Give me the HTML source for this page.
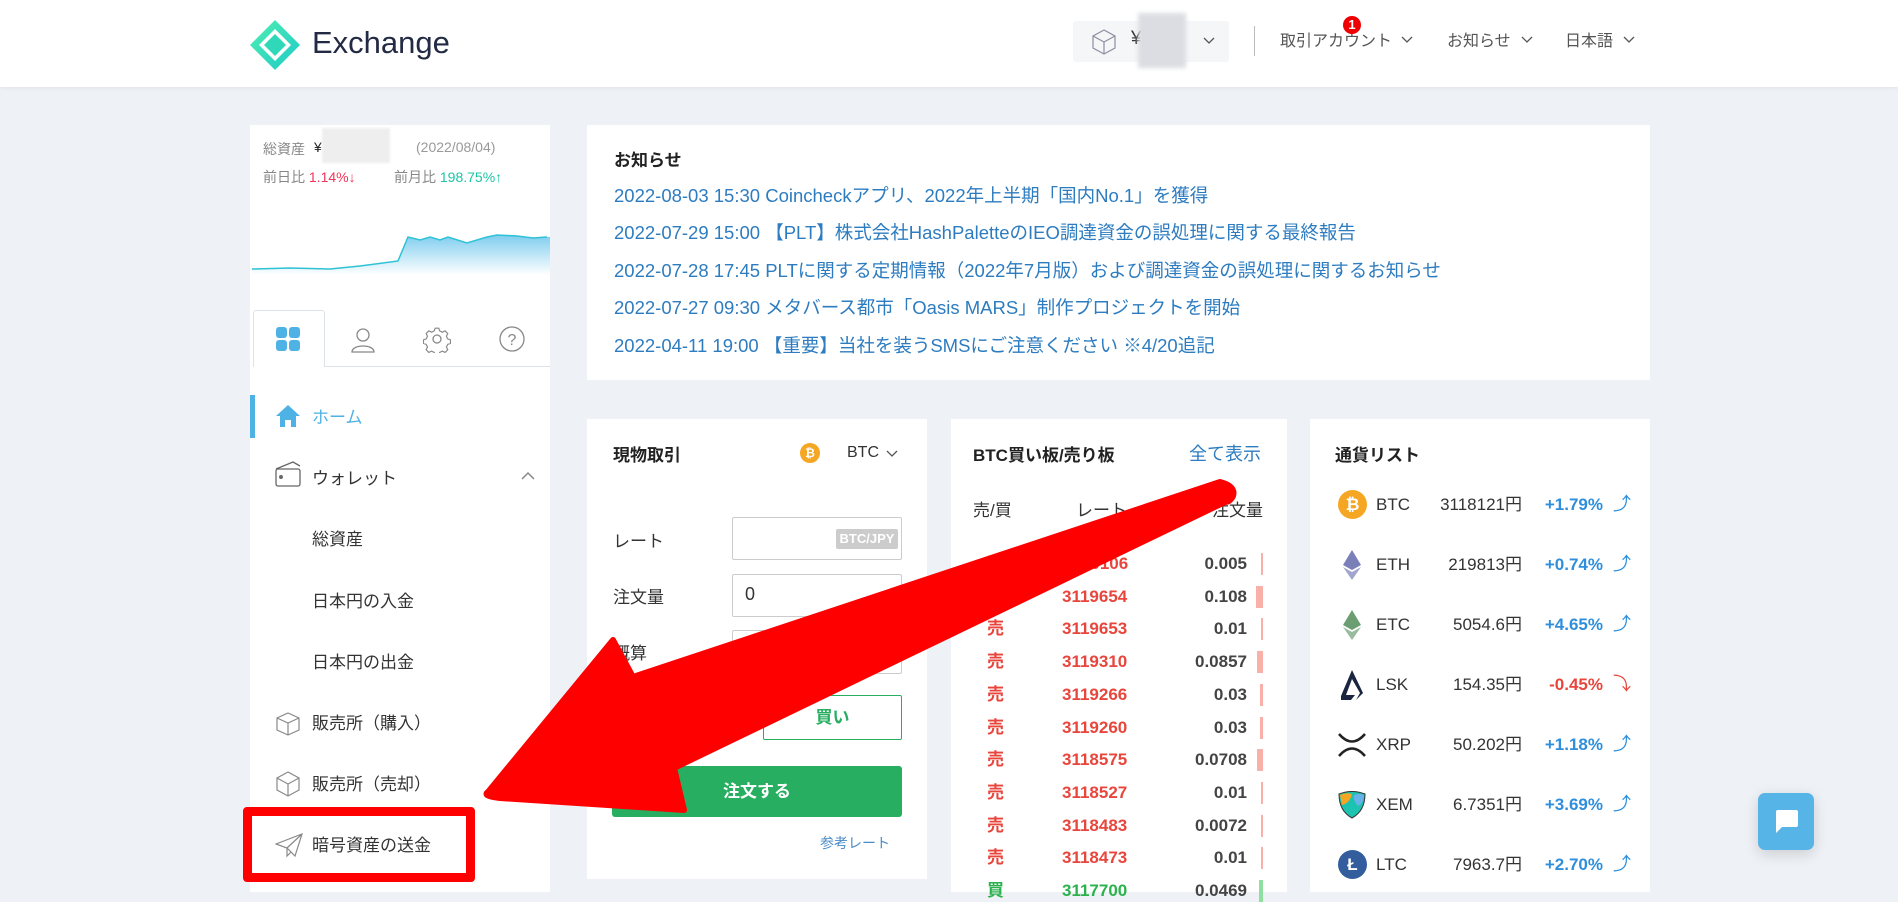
<!DOCTYPE html>
<html><head><meta charset="utf-8">
<style>
*{margin:0;padding:0;box-sizing:border-box}
body{width:1898px;height:892px;overflow:hidden;background:#eef1f6;font-family:"Liberation Sans","Noto Sans CJK JP",sans-serif;color:#333;position:relative}
.a{position:absolute;white-space:nowrap}
.hdr{position:absolute;left:0;top:0;width:1898px;height:87px;background:#fff;box-shadow:0 1px 4px rgba(0,0,0,.06)}
.panel{position:absolute;background:#fff}
.nav{font-size:17px;color:#333}
.news{font-size:18.5px;color:#2d7cc0;left:27px}
.ob{font-size:17px;font-weight:bold}
.cur{font-size:17px;line-height:22px}
</style></head><body>
<div class="hdr">
 <svg class="a" style="left:250px;top:20px" width="50" height="50" viewBox="0 0 50 50">
  <defs><linearGradient id="g" x1="0" y1="0" x2="1" y2="1"><stop offset="0" stop-color="#4ff0b0"/><stop offset="1" stop-color="#1ec9c9"/></linearGradient></defs>
  <polygon points="25,0 50,25 25,50 0,25" fill="url(#g)"/>
  <polygon points="25,9 41,25 25,41 9,25" fill="#fff"/>
  <polygon points="25,14 36,25 25,36 14,25" fill="#2fd8b8"/>
 </svg>
 <div class="a" style="left:312px;top:25px;font-size:31px;color:#232a44">Exchange</div>
 <div class="a" style="left:1073px;top:21px;width:156px;height:41px;background:#f5f6f8;border-radius:3px"></div>
 <svg class="a" style="left:1090px;top:28px" width="28" height="28" viewBox="0 0 28 28" fill="none" stroke="#8a8fa0" stroke-width="1.2"><polygon points="14,2 25,8 25,20 14,26 3,20 3,8"/><polyline points="3,8 14,14 25,8"/><line x1="14" y1="14" x2="14" y2="26"/></svg>
 <div class="a" style="left:1131px;top:28px;font-size:19px;color:#333">¥</div>
 <div class="a" style="left:1138px;top:13px;width:48px;height:55px;background:#dcdde2;filter:blur(2px)"></div>
 <svg class="a" style="left:1202px;top:36px" width="14" height="10"><polyline points="2,2 7,7 12,2" fill="none" stroke="#555" stroke-width="1.3"/></svg>
 <div class="a" style="left:1254px;top:26px;width:1px;height:30px;background:#bbb"></div>
 <div class="a" style="left:1280px;top:27px;font-size:16px;color:#555">取引アカウント</div>
 <div class="a" style="left:1343px;top:16px;width:18px;height:18px;border-radius:9px;background:#e00;color:#fff;font-size:13px;font-weight:bold;text-align:center;line-height:18px">1</div>
 <svg class="a" style="left:1400px;top:35px" width="14" height="10"><polyline points="2,2 7,7 12,2" fill="none" stroke="#555" stroke-width="1.3"/></svg>
 <div class="a" style="left:1447px;top:27px;font-size:16px;color:#555">お知らせ</div>
 <svg class="a" style="left:1520px;top:35px" width="14" height="10"><polyline points="2,2 7,7 12,2" fill="none" stroke="#555" stroke-width="1.3"/></svg>
 <div class="a" style="left:1565px;top:27px;font-size:16px;color:#555">日本語</div>
 <svg class="a" style="left:1622px;top:35px" width="14" height="10"><polyline points="2,2 7,7 12,2" fill="none" stroke="#555" stroke-width="1.3"/></svg>
</div>

<!-- left panel -->
<div class="panel" style="left:250px;top:125px;width:300px;height:767px">
 <div class="a" style="left:13px;top:14px;font-size:14px;color:#888">総資産</div>
 <div class="a" style="left:64px;top:14px;font-size:14px;color:#222">¥</div>
 <div class="a" style="left:72px;top:3px;width:68px;height:35px;background:#eee;filter:blur(1px)"></div>
 <div class="a" style="left:166px;top:14px;font-size:14px;color:#999">(2022/08/04)</div>
 <div class="a" style="left:13px;top:42px;font-size:14px;color:#888">前日比 <span style="color:#f0355b">1.14%↓</span></div>
 <div class="a" style="left:144px;top:42px;font-size:14px;color:#888">前月比 <span style="color:#1cc5a5">198.75%↑</span></div>
 <svg class="a" style="left:0;top:100px" width="300" height="55" viewBox="250 225 300 55">
  <defs><linearGradient id="c" x1="0" y1="0" x2="0" y2="1"><stop offset="0" stop-color="#7fcdef"/><stop offset="1" stop-color="#fff"/></linearGradient></defs>
  <polygon points="252,269 290,268 330,269 360,266 398,261 408,237 420,240 430,237 440,240 448,237 467,243 487,237 497,235 517,236 533,238 547,237 550,237 550,275 252,275" fill="url(#c)"/>
  <polyline points="252,269 290,268 330,269 360,266 398,261 408,237 420,240 430,237 440,240 448,237 467,243 487,237 497,235 517,236 533,238 547,237" fill="none" stroke="#2ec2d6" stroke-width="1.5"/>
 </svg>
 <div class="a" style="left:3px;top:185px;width:72px;height:57px;background:#fff;border:1px solid #dde1e8;border-bottom:none;border-radius:3px 3px 0 0"></div>
 <div class="a" style="left:74px;top:241px;width:226px;height:1px;background:#dde1e8"></div>
 <svg class="a" style="left:25px;top:201px" width="26" height="26"><rect x="1" y="1" width="11" height="11" rx="3" fill="#4eb2e4"/><rect x="14" y="1" width="11" height="11" rx="3" fill="#4eb2e4"/><rect x="1" y="14" width="11" height="11" rx="3" fill="#4eb2e4"/><rect x="14" y="14" width="11" height="11" rx="3" fill="#4eb2e4"/></svg>
 <svg class="a" style="left:99px;top:201px" width="28" height="28" fill="none" stroke="#888" stroke-width="1.3"><circle cx="14" cy="9" r="6"/><path d="M3,26 C3,18 25,18 25,26 Z"/></svg>
 <svg class="a" style="left:173px;top:200px" width="28" height="28" viewBox="0 0 28 28" fill="none" stroke="#888" stroke-width="1.3"><circle cx="14" cy="14" r="4"/><path d="M12,2h4l1,3 3,1.5 3-1.5 3,3-1.5,3 1.5,3 3,1v4l-3,1-1.5,3 1.5,3-3,3-3-1.5-3,1.5-1,3h-4l-1-3-3-1.5-3,1.5-3-3 1.5-3-1.5-3-3-1v-4l3-1 1.5-3-1.5-3 3-3 3,1.5 3-1.5z" transform="scale(0.9) translate(1.5,1.5)"/></svg>
 <svg class="a" style="left:248px;top:200px" width="28" height="28" fill="none" stroke="#888" stroke-width="1.3"><circle cx="14" cy="14" r="12"/><text x="14" y="20" text-anchor="middle" font-size="16" fill="#888" stroke="none" font-family="Liberation Sans">?</text></svg>

 <div class="a" style="left:0;top:270px;width:5px;height:43px;background:#4eb2e4"></div>
 <svg class="a" style="left:25px;top:279px" width="26" height="24"><path d="M13,1 L25,12 L21,12 L21,23 L16,23 L16,16 L10,16 L10,23 L5,23 L5,12 L1,12 Z" fill="#4eb2e4"/></svg>
 <div class="a nav" style="left:62px;top:278px;color:#4eb2e4">ホーム</div>
 <svg class="a" style="left:25px;top:336px" width="26" height="26" fill="none" stroke="#666" stroke-width="1.3"><rect x="1" y="8" width="24" height="17" rx="2"/><path d="M1,8 L18,1 L25,5"/><circle cx="6" cy="16" r="1.3" fill="#666"/></svg>
 <div class="a nav" style="left:62px;top:339px">ウォレット</div>
 <svg class="a" style="left:270px;top:346px" width="16" height="10"><polyline points="2,8 8,2 14,8" fill="none" stroke="#888" stroke-width="1.5"/></svg>
 <div class="a nav" style="left:62px;top:400px">総資産</div>
 <div class="a nav" style="left:62px;top:462px">日本円の入金</div>
 <div class="a nav" style="left:62px;top:523px">日本円の出金</div>
 <svg class="a" style="left:25px;top:585px" width="26" height="26" fill="none" stroke="#888" stroke-width="1.2"><polygon points="13,3 24,8 24,20 13,25 2,20 2,8"/><polyline points="2,8 13,13 24,8"/><line x1="13" y1="13" x2="13" y2="25"/></svg>
 <div class="a nav" style="left:62px;top:584px">販売所（購入）</div>
 <svg class="a" style="left:25px;top:646px" width="26" height="26" fill="none" stroke="#888" stroke-width="1.2"><polygon points="13,1 24,7 24,19 13,25 2,19 2,7"/><polyline points="2,7 13,13 24,7"/><line x1="13" y1="13" x2="13" y2="25"/></svg>
 <div class="a nav" style="left:62px;top:645px">販売所（売却）</div>
 <svg class="a" style="left:25px;top:707px" width="28" height="26" fill="none" stroke="#888" stroke-width="1.2"><path d="M1,12 L27,2 L20,24 L12,16 Z M12,16 L27,2 M12,16 L12,24 L16,20"/></svg>
 <div class="a nav" style="left:62px;top:706px">暗号資産の送金</div>
</div>
<div class="a" style="left:243px;top:807px;width:232px;height:75px;border:9px solid #f00;border-radius:4px"></div>

<!-- news -->
<div class="panel" style="left:587px;top:125px;width:1063px;height:255px">
 <div class="a" style="left:27px;top:21px;font-size:17px;font-weight:bold;color:#222">お知らせ</div>
 <div class="a news" style="top:57px">2022-08-03 15:30 Coincheckアプリ、2022年上半期「国内No.1」を獲得</div>
 <div class="a news" style="top:94px">2022-07-29 15:00 【PLT】株式会社HashPaletteのIEO調達資金の誤処理に関する最終報告</div>
 <div class="a news" style="top:132px">2022-07-28 17:45 PLTに関する定期情報（2022年7月版）および調達資金の誤処理に関するお知らせ</div>
 <div class="a news" style="top:169px">2022-07-27 09:30 メタバース都市「Oasis MARS」制作プロジェクトを開始</div>
 <div class="a news" style="top:207px">2022-04-11 19:00 【重要】当社を装うSMSにご注意ください ※4/20追記</div>
</div>

<!-- trade -->
<div class="panel" style="left:587px;top:419px;width:340px;height:460px">
 <div class="a" style="left:26px;top:22px;font-size:17px;font-weight:bold;color:#222">現物取引</div>
 <div class="a" style="left:213px;top:24px;width:20px;height:20px;border-radius:10px;background:#f5a623;color:#fff;font-size:12px;font-weight:bold;text-align:center;line-height:20px">₿</div>
 <div class="a" style="left:260px;top:25px;font-size:16px;color:#333">BTC</div>
 <svg class="a" style="left:298px;top:30px" width="14" height="10"><polyline points="2,2 7,7 12,2" fill="none" stroke="#555" stroke-width="1.3"/></svg>
 <div class="a" style="left:26px;top:108px;font-size:17px">レート</div>
 <div class="a" style="left:145px;top:98px;width:170px;height:43px;border:1px solid #ccc;border-radius:2px"></div>
 <div class="a" style="left:249px;top:110px;width:62px;height:20px;background:#ccc;border-radius:2px;color:#fff;font-size:13px;font-weight:bold;text-align:center;line-height:20px">BTC/JPY</div>
 <div class="a" style="left:26px;top:164px;font-size:17px">注文量</div>
 <div class="a" style="left:145px;top:155px;width:170px;height:43px;border:1px solid #ccc;border-radius:2px"></div>
 <div class="a" style="left:158px;top:165px;font-size:18px">0</div>
 <div class="a" style="left:26px;top:220px;font-size:17px">概算</div>
 <div class="a" style="left:145px;top:211px;width:170px;height:44px;border:1px solid #ccc;border-radius:2px"></div>
 <div class="a" style="left:176px;top:276px;width:139px;height:45px;border:1px solid #27ae60;border-radius:2px;color:#27ae60;font-size:17px;font-weight:bold;text-align:center;line-height:43px">買い</div>
 <div class="a" style="left:25px;top:347px;width:290px;height:51px;background:#27ae60;border-radius:3px;color:#fff;font-size:17px;font-weight:bold;text-align:center;line-height:51px">注文する</div>
 <div class="a" style="left:233px;top:414px;font-size:14px;color:#4a8bc6">参考レート</div>
</div>

<!-- orderbook -->
<div class="panel" style="left:951px;top:419px;width:336px;height:473px">
 <div class="a" style="left:22px;top:22px;font-size:17px;font-weight:bold;color:#222">BTC買い板/売り板</div>
 <div class="a" style="left:238px;top:21px;font-size:18px;color:#2d7cc0">全て表示</div>
 <div class="a" style="left:22px;top:77px;font-size:17px">売/買</div>
 <div class="a" style="left:125px;top:77px;font-size:17px">レート</div>
 <div class="a" style="right:24px;top:77px;font-size:17px">注文量</div>
 <div id="ob"></div>
</div>

<!-- currency -->
<div class="panel" style="left:1310px;top:419px;width:340px;height:473px">
 <div class="a" style="left:25px;top:22px;font-size:17px;font-weight:bold;color:#222">通貨リスト</div>
 <div id="cl"></div>
</div>

<div class="a" style="left:1758px;top:793px;width:56px;height:57px;background:#56b4e6;border-radius:7px;box-shadow:0 4px 14px rgba(0,0,0,.15)"></div>
<svg class="a" style="left:1772px;top:808px" width="28" height="28"><path d="M4,2 H24 Q26,2 26,4 V17 Q26,19 24,19 H10 L4,25 V4 Q4,2 6,2 Z" fill="#fff"/></svg>

<!-- big red arrow -->
<svg class="a" style="left:0;top:0" width="1898" height="892">
 <path d="M488,792 L613,640 L633,677 L1220,482 Q1236,486 1233,496 Q1230,502 1225,502 L674,768 L684,810 L500,798 Q482,796 488,792 Z" fill="#f00" stroke="#f00" stroke-width="6" stroke-linejoin="round"/>
</svg>

<script>
var rows=[["売","3120106","0.005",2],["売","3119654","0.108",7],["売","3119653","0.01",2],["売","3119310","0.0857",6],["売","3119266","0.03",3],["売","3119260","0.03",3],["売","3118575","0.0708",6],["売","3118527","0.01",2],["売","3118483","0.0072",2],["売","3118473","0.01",2],["買","3117700","0.0469",4]];
var h="";rows.forEach(function(r,i){var y=134+i*32.7;var c=r[0]=="売"?"#e8463c":"#2bb24c";var bc=r[0]=="売"?"#f9b0a9":"#8fe0a0";
h+='<div class="a ob" style="left:36px;top:'+y+'px;color:'+c+';line-height:22px">'+r[0]+'</div><div class="a ob" style="left:111px;top:'+y+'px;color:'+c+';line-height:22px">'+r[1]+'</div><div class="a ob" style="right:40px;top:'+y+'px;color:#444;line-height:22px">'+r[2]+'</div><div class="a" style="right:24px;top:'+y+'px;width:'+r[3]+'px;height:22px;background:'+bc+'"></div>';});
document.getElementById("ob").innerHTML=h;
var cs=[["BTC","3118121円","+1.79%",1,"#f5a623"],["ETH","219813円","+0.74%",1,"#7b7fb8"],["ETC","5054.6円","+4.65%",1,"#6d9e73"],["LSK","154.35円","-0.45%",0,"#1a2540"],["XRP","50.202円","+1.18%",1,"#222"],["XEM","6.7351円","+3.69%",1,"#1cc3b0"],["LTC","7963.7円","+2.70%",1,"#345d9d"]];
h="";cs.forEach(function(c,i){var y=75+i*60;var col=c[3]?"#2f8fdc":"#e8463c";
var ic;
if(c[0]=="ETH"||c[0]=="ETC")ic='<svg class="a" style="left:33px;top:'+(y-4)+'px" width="18" height="30"><polygon points="9,0 18,15 9,20 0,15" fill="'+c[4]+'"/><polygon points="9,22 18,17 9,30 0,17" fill="'+c[4]+'" opacity=".7"/></svg>';
else if(c[0]=="XRP")ic='<svg class="a" style="left:28px;top:'+(y-1)+'px" width="28" height="24" fill="none" stroke="#222" stroke-width="2.5"><path d="M1,1 Q14,16 27,1 M1,23 Q14,8 27,23"/></svg>';
else if(c[0]=="LSK")ic='<svg class="a" style="left:31px;top:'+(y-4)+'px" width="22" height="30"><path d="M11,0 L22,23 L15,30 L19,23 L11,9 L5,25 L14,25 L10,30 L0,30 L0,26 Z" fill="#1a2540"/></svg>';
else if(c[0]=="XEM")ic='<svg class="a" style="left:28px;top:'+(y-3)+'px" width="28" height="28"><path d="M1,3 Q14,-2 27,3 Q27,20 14,27 Q1,20 1,3Z" fill="#1cc3b0" stroke="#333" stroke-width="1"/><path d="M2,4 Q8,1 14,3 Q12,12 4,14 Z" fill="#f5a623"/><path d="M16,4 Q22,2 26,4 Q26,12 20,15 Q15,10 16,4Z" fill="#67b2e8"/></svg>';
else ic='<div class="a" style="left:28px;top:'+(y-4)+'px;width:29px;height:29px;border-radius:15px;background:'+c[4]+';color:#fff;font-weight:bold;font-size:17px;text-align:center;line-height:29px">'+(c[0]=="BTC"?"₿":"Ł")+'</div>';
h+=ic+'<div class="a cur" style="left:66px;top:'+y+'px">'+c[0]+'</div><div class="a cur" style="right:128px;top:'+y+'px">'+c[1]+'</div><div class="a cur" style="right:47px;top:'+y+'px;color:'+col+';font-weight:bold">'+c[2]+'</div><div class="a" style="left:303px;top:'+(y-1)+'px;font-size:18px;line-height:22px;color:'+col+'">'+(c[3]?"⤴":"⤵")+'</div>';});
document.getElementById("cl").innerHTML=h;
</script>
</body></html>
